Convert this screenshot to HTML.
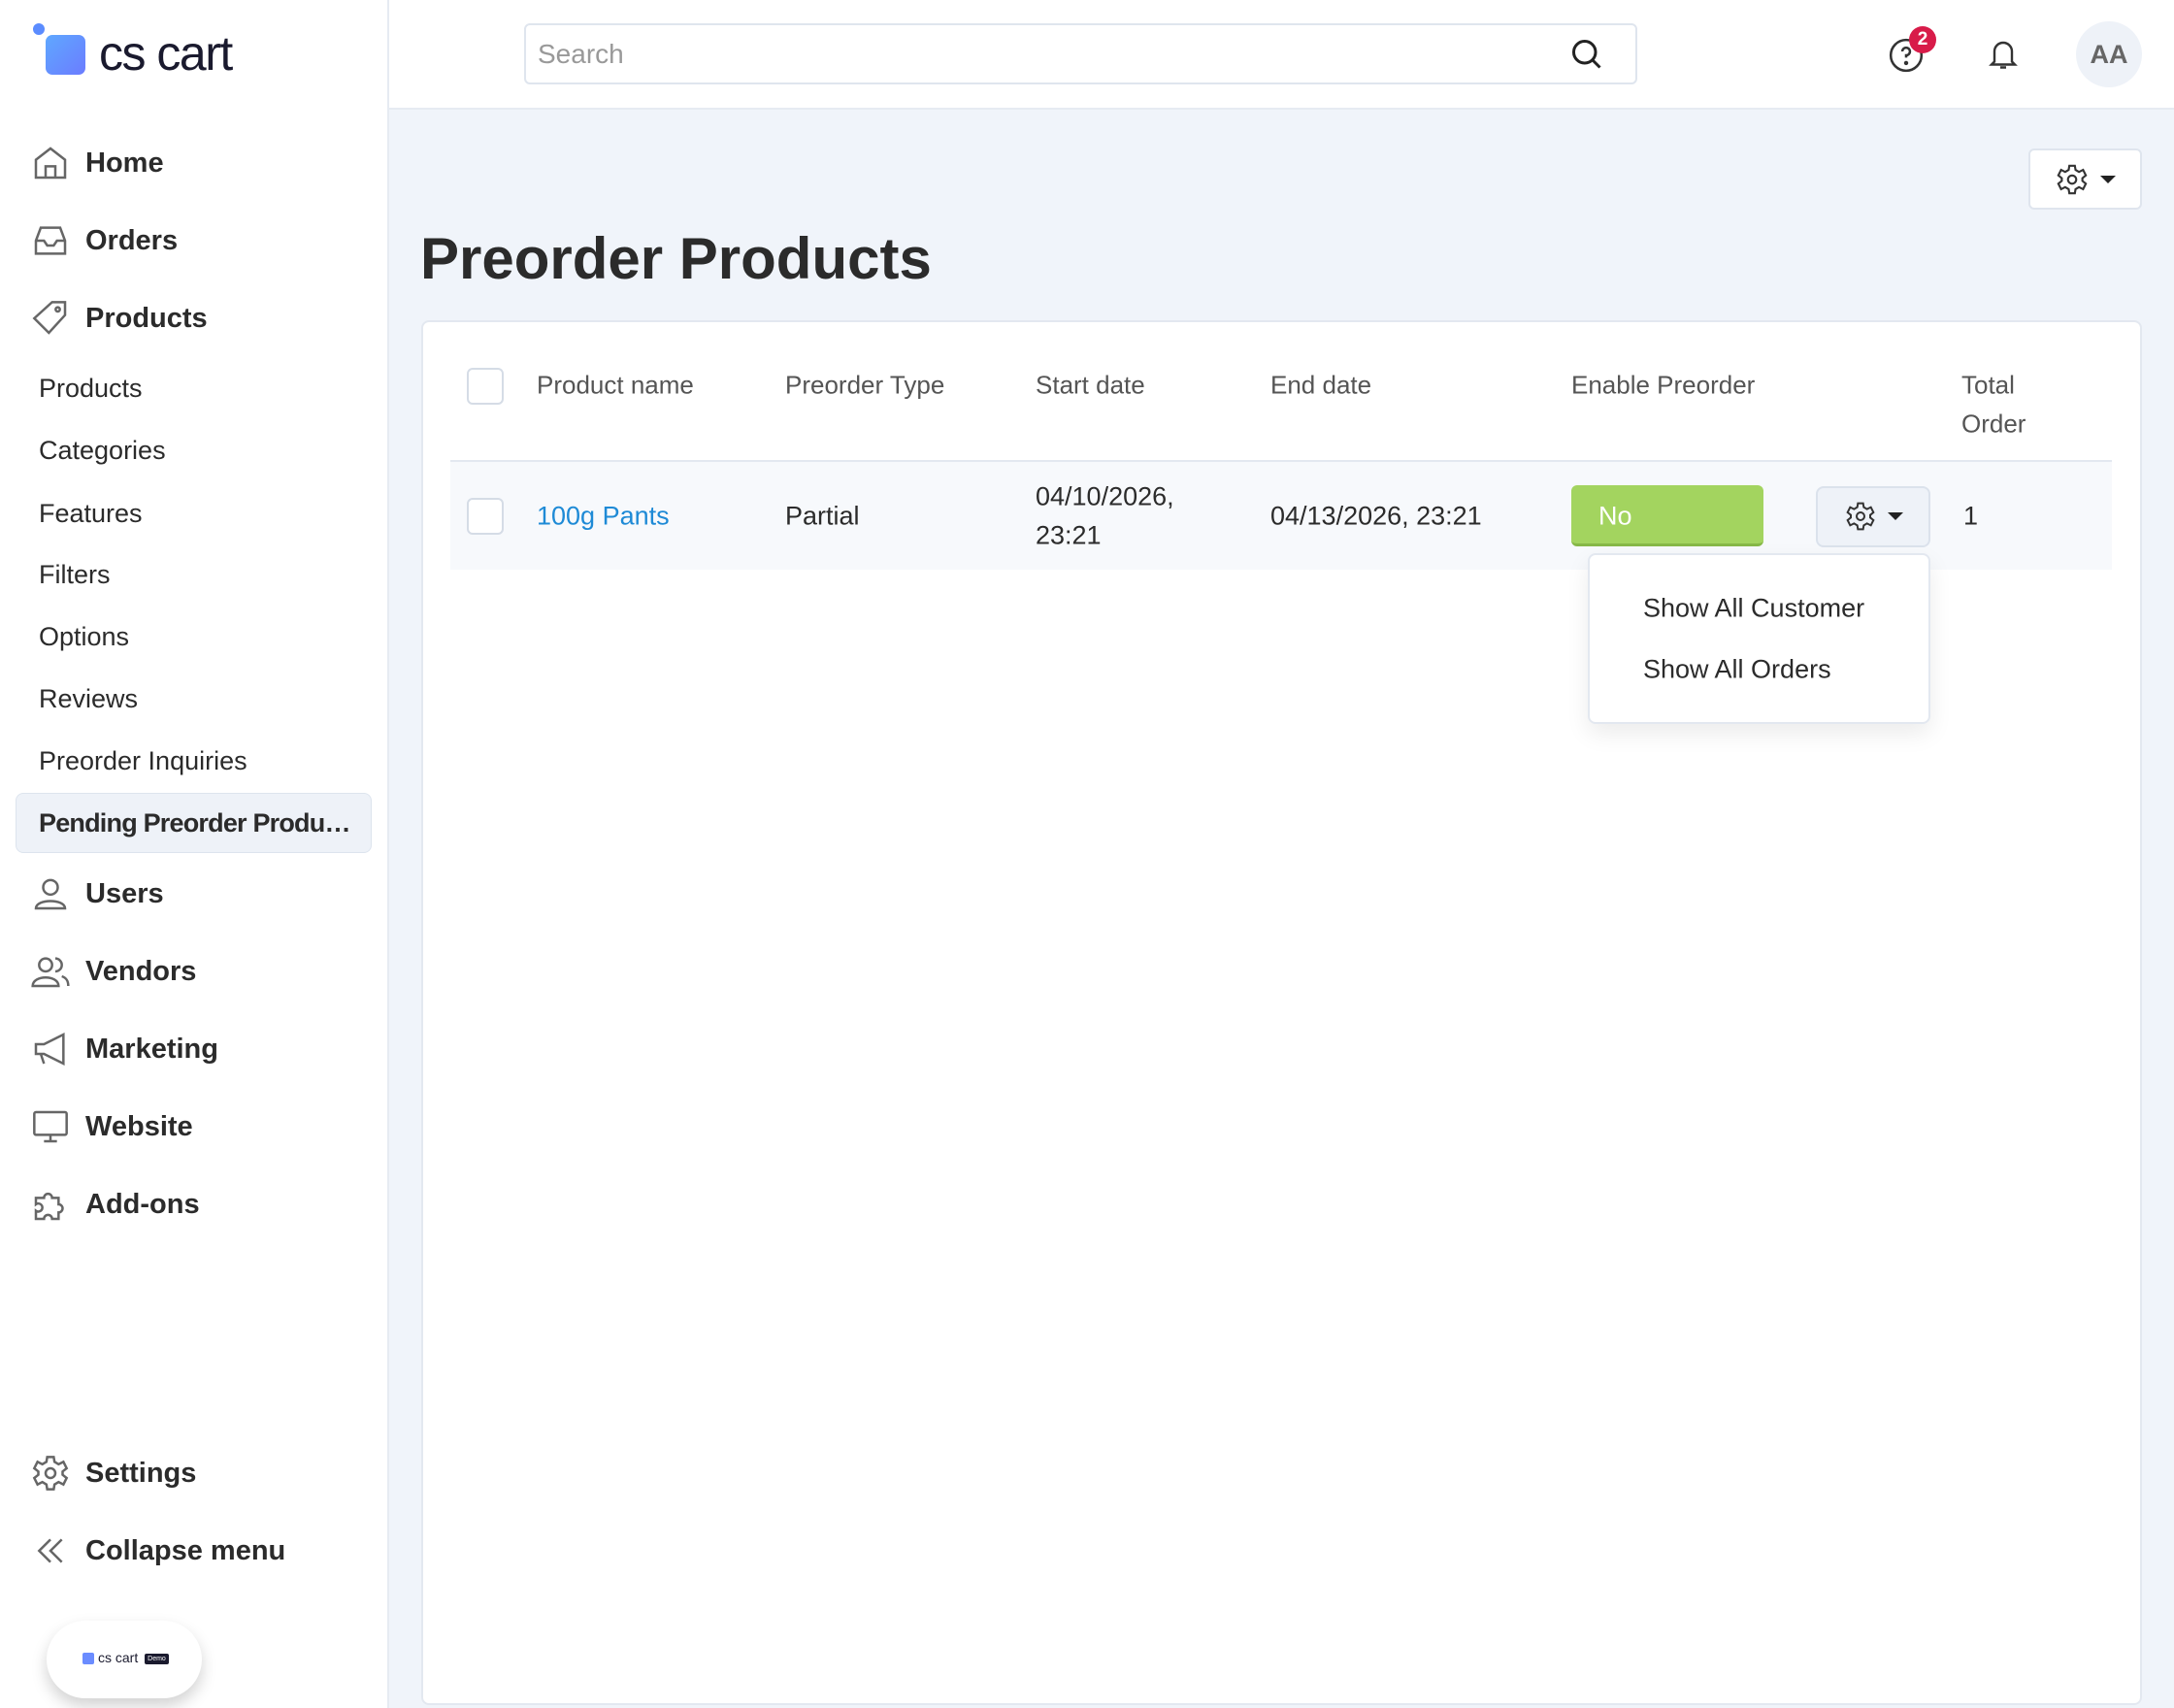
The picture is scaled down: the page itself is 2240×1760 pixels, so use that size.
<!DOCTYPE html>
<html><head><meta charset="utf-8">
<style>
*{box-sizing:border-box;margin:0;padding:0}
body{width:2240px;height:1760px;overflow:hidden;background:#f0f4fa;font-family:"Liberation Sans",sans-serif;color:#2b2b2b;position:relative}
.abs{position:absolute}
#side{left:0;top:0;width:401px;height:1760px;background:#fff;border-right:2px solid #e6ebf2}
#top{left:401px;top:0;width:1839px;height:113px;background:#fff;border-bottom:2px solid #e6ebf2}
.mi{position:absolute;left:88px;font-size:29px;font-weight:bold;color:#2b2b2b;transform:translateY(-48%)}
.si{position:absolute;left:40px;font-size:27px;color:#2b2b2b;transform:translateY(-48%)}
.ic{position:absolute;left:32px;width:40px;height:40px;transform:translateY(-50%)}
.th{position:absolute;font-size:26px;color:#555;transform:translateY(-50%)}
.td{position:absolute;font-size:27px;color:#2b2b2b;transform:translateY(-50%)}
svg{overflow:visible}
</style></head><body>
<div id="side" class="abs">
  <div class="abs" style="left:34px;top:24px;width:12px;height:12px;border-radius:50%;background:#5b8cff"></div>
  <div class="abs" style="left:47px;top:36px;width:41px;height:41px;border-radius:7px;background:linear-gradient(135deg,#5fa8ff,#6b7cff)"></div>
  <div class="abs" style="left:102px;top:26px;font-size:50px;color:#1a1a2e;letter-spacing:-1.5px">cs cart</div>

  <svg class="ic" style="top:168px" viewBox="0 0 24 24" fill="none" stroke="#666" stroke-width="1.5"><path d="M3 10 L12 3 L21 10 V21 H3 Z M9 21 V14 H15 V21"/></svg>
  <div class="mi" style="top:168px">Home</div>
  <svg class="ic" style="top:248px" viewBox="0 0 24 24" fill="none" stroke="#666" stroke-width="1.5"><path d="M3 12 L6 4 H18 L21 12 V20 H3 Z M3 12 H8 L10 15 H14 L16 12 H21"/></svg>
  <div class="mi" style="top:248px">Orders</div>
  <svg class="ic" style="top:328px" viewBox="0 0 24 24" fill="none" stroke="#666" stroke-width="1.5"><path d="M13 2 H21 V10 L11 21 L2 12 Z"/><circle cx="16.5" cy="6.5" r="1.3"/></svg>
  <div class="mi" style="top:328px">Products</div>

  <div class="si" style="top:400px">Products</div>
  <div class="si" style="top:464px">Categories</div>
  <div class="si" style="top:529px">Features</div>
  <div class="si" style="top:592px">Filters</div>
  <div class="si" style="top:656px">Options</div>
  <div class="si" style="top:720px">Reviews</div>
  <div class="si" style="top:784px">Preorder Inquiries</div>
  <div class="abs" style="left:16px;top:817px;width:367px;height:62px;background:#eef2f8;border:1px solid #dde4ee;border-radius:8px"></div>
  <div class="si" style="top:848px;font-weight:bold;letter-spacing:-0.8px">Pending Preorder Produ…</div>

  <svg class="ic" style="top:921px" viewBox="0 0 24 24" fill="none" stroke="#666" stroke-width="1.5"><circle cx="12" cy="8" r="4.5"/><path d="M3 21 C3 15 21 15 21 21 Z"/></svg>
  <div class="mi" style="top:921px">Users</div>
  <svg class="ic" style="top:1001px" viewBox="0 0 24 24" fill="none" stroke="#666" stroke-width="1.5"><circle cx="9" cy="8" r="4"/><path d="M1 21 C1 14 17 14 17 21 Z M15 4 A4 4 0 0 1 15 12 M19 15 C22 16 23 18 23 21"/></svg>
  <div class="mi" style="top:1001px">Vendors</div>
  <svg class="ic" style="top:1081px" viewBox="0 0 24 24" fill="none" stroke="#666" stroke-width="1.5"><path d="M3 9 H8 L20 3 V21 L8 15 H3 Z M6 15 L8 21"/></svg>
  <div class="mi" style="top:1081px">Marketing</div>
  <svg class="ic" style="top:1161px" viewBox="0 0 24 24" fill="none" stroke="#666" stroke-width="1.5"><rect x="2" y="3" width="20" height="14" rx="1"/><path d="M12 17 V21 M8 21 H16"/></svg>
  <div class="mi" style="top:1161px">Website</div>
  <svg class="ic" style="top:1241px" viewBox="0 0 24 24" fill="none" stroke="#666" stroke-width="1.5"><path d="M3 8 H8 A2.5 2.5 0 1 1 13 8 H17 V12 A2.5 2.5 0 1 1 17 17 V21 H13 A2.5 2.5 0 1 0 8 21 H3 V16 A2.5 2.5 0 1 0 3 12 Z"/></svg>
  <div class="mi" style="top:1241px">Add-ons</div>

  <svg class="ic" style="top:1518px" viewBox="0 0 24 24" fill="none" stroke="#666" stroke-width="1.5"><circle cx="12" cy="12" r="3"/><path d="M10 2 H14 L14.5 5 L17 6.5 L20 5 L22 9 L19.5 11 V13 L22 15 L20 19 L17 17.5 L14.5 19 L14 22 H10 L9.5 19 L7 17.5 L4 19 L2 15 L4.5 13 V11 L2 9 L4 5 L7 6.5 L9.5 5 Z"/></svg>
  <div class="mi" style="top:1518px">Settings</div>
  <svg class="ic" style="top:1598px" viewBox="0 0 24 24" fill="none" stroke="#666" stroke-width="1.5"><path d="M12 5 L5 12 L12 19 M19 5 L12 12 L19 19"/></svg>
  <div class="mi" style="top:1598px">Collapse menu</div>

  <div class="abs" style="left:48px;top:1670px;width:160px;height:80px;border-radius:40px;background:#fff;box-shadow:0 8px 16px rgba(0,0,0,.18)"></div>
  <div class="abs" style="left:85px;top:1703px;width:12px;height:12px;background:#6b8cff;border-radius:2px"></div>
  <div class="abs" style="left:101px;top:1700px;font-size:14px;color:#1a1a2e">cs cart</div>
  <div class="abs" style="left:149px;top:1704px;width:25px;height:11px;background:#1a1a2e;border-radius:2px;font-size:7px;color:#fff;text-align:center;line-height:11px">Demo</div>
</div>

<div id="top" class="abs">
  <div class="abs" style="left:139px;top:24px;width:1147px;height:63px;border:2px solid #dfe5ee;border-radius:6px;background:#fff"></div>
  <div class="abs" style="left:153px;top:40px;font-size:28px;color:#999">Search</div>
  <svg class="abs" style="left:1216px;top:38px;width:36px;height:36px" viewBox="0 0 24 24" fill="none" stroke="#222" stroke-width="2"><circle cx="10.5" cy="10.5" r="7.5"/><path d="M16 16 L21 21"/></svg>
  <svg class="abs" style="left:1544px;top:38px;width:38px;height:38px" viewBox="0 0 24 24" fill="none" stroke="#333" stroke-width="1.6"><circle cx="12" cy="12" r="10"/><path d="M9.5 9.5 A2.5 2.5 0 1 1 12 12 V13.5"/><circle cx="12" cy="17" r=".6" fill="#333"/></svg>
  <div class="abs" style="left:1566px;top:27px;width:28px;height:28px;border-radius:50%;background:#d81b49;color:#fff;font-size:19px;font-weight:bold;text-align:center;line-height:28px">2</div>
  <svg class="abs" style="left:1645px;top:37px;width:36px;height:38px" viewBox="0 0 24 24" fill="none" stroke="#333" stroke-width="1.6"><path d="M6 17 V10 A6 6 0 0 1 18 10 V17 L20 19 H4 Z M10 21 H14"/></svg>
  <div class="abs" style="left:1738px;top:22px;width:68px;height:68px;border-radius:50%;background:#eef2f8;color:#666;font-size:27px;font-weight:bold;text-align:center;line-height:68px">AA</div>
</div>

<div class="abs" style="left:2090px;top:153px;width:117px;height:63px;background:#fff;border:2px solid #dfe5ee;border-radius:6px"></div>
<svg class="abs" style="left:2118px;top:168px;width:34px;height:34px" viewBox="0 0 24 24" fill="none" stroke="#333" stroke-width="1.5"><circle cx="12" cy="12" r="3"/><path d="M10 2 H14 L14.5 5 L17 6.5 L20 5 L22 9 L19.5 11 V13 L22 15 L20 19 L17 17.5 L14.5 19 L14 22 H10 L9.5 19 L7 17.5 L4 19 L2 15 L4.5 13 V11 L2 9 L4 5 L7 6.5 L9.5 5 Z"/></svg>
<div class="abs" style="left:2164px;top:181px;border-left:8px solid transparent;border-right:8px solid transparent;border-top:8px solid #222"></div>

<div class="abs" style="left:433px;top:232px;font-size:60px;font-weight:bold;color:#2b2b2b">Preorder Products</div>

<div class="abs" style="left:434px;top:330px;width:1773px;height:1427px;background:#fff;border:2px solid #e3e8f0;border-radius:8px"></div>
<div class="abs" style="left:481px;top:379px;width:38px;height:38px;border:2px solid #d5dce6;border-radius:6px;background:#fff"></div>
<div class="th" style="left:553px;top:397px">Product name</div>
<div class="th" style="left:809px;top:397px">Preorder Type</div>
<div class="th" style="left:1067px;top:397px">Start date</div>
<div class="th" style="left:1309px;top:397px">End date</div>
<div class="th" style="left:1619px;top:397px">Enable Preorder</div>
<div class="th" style="left:2021px;top:397px">Total</div>
<div class="th" style="left:2021px;top:437px">Order</div>
<div class="abs" style="left:464px;top:474px;width:1712px;height:2px;background:#e3e8f0"></div>
<div class="abs" style="left:464px;top:476px;width:1712px;height:111px;background:#f7f9fc"></div>
<div class="abs" style="left:481px;top:513px;width:38px;height:38px;border:2px solid #d5dce6;border-radius:6px;background:#fff"></div>
<div class="td" style="left:553px;top:532px;color:#1e8ad6">100g Pants</div>
<div class="td" style="left:809px;top:532px">Partial</div>
<div class="td" style="left:1067px;top:512px">04/10/2026,</div>
<div class="td" style="left:1067px;top:552px">23:21</div>
<div class="td" style="left:1309px;top:532px">04/13/2026, 23:21</div>
<div class="abs" style="left:1619px;top:500px;width:198px;height:63px;background:#a3d45f;border-radius:6px;border-bottom:3px solid #86b847"></div>
<div class="td" style="left:1647px;top:532px;color:#fff">No</div>
<div class="abs" style="left:1871px;top:501px;width:118px;height:63px;background:#eef2f8;border:2px solid #dbe2ec;border-radius:8px"></div>
<svg class="abs" style="left:1901px;top:516px;width:32px;height:32px" viewBox="0 0 24 24" fill="none" stroke="#333" stroke-width="1.5"><circle cx="12" cy="12" r="3"/><path d="M10 2 H14 L14.5 5 L17 6.5 L20 5 L22 9 L19.5 11 V13 L22 15 L20 19 L17 17.5 L14.5 19 L14 22 H10 L9.5 19 L7 17.5 L4 19 L2 15 L4.5 13 V11 L2 9 L4 5 L7 6.5 L9.5 5 Z"/></svg>
<div class="abs" style="left:1945px;top:528px;border-left:8px solid transparent;border-right:8px solid transparent;border-top:8px solid #222"></div>
<div class="td" style="left:2023px;top:532px">1</div>
<div class="abs" style="left:1636px;top:570px;width:353px;height:176px;background:#fff;border:2px solid #e3e8f0;border-radius:8px;box-shadow:0 10px 24px rgba(0,0,0,.08)"></div>
<div class="td" style="left:1693px;top:627px">Show All Customer</div>
<div class="td" style="left:1693px;top:690px">Show All Orders</div>
</body></html>
